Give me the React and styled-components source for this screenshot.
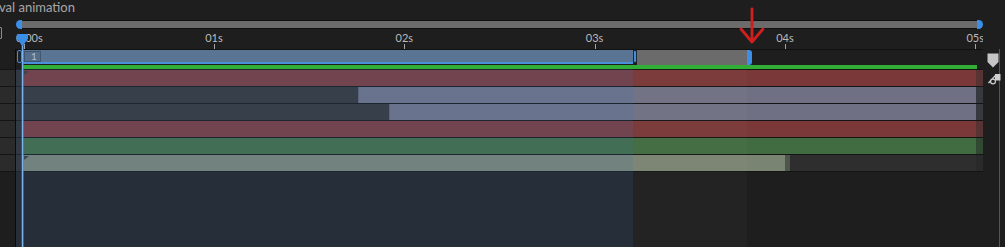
import React from 'react';
import styled, { createGlobalStyle } from 'styled-components';

const PX_PER_SEC = 190.3;
const ORIGIN = 7.7; // x of 0s inside the timeline column

const seconds = ['0:00s', '01s', '02s', '03s', '04s', '05s'];

const tracks = [
    { kind: 'red', marker: true },
    { kind: 'lavender', lead: 335 },
    { kind: 'lavender', lead: 366 },
    { kind: 'red' },
    { kind: 'green' },
    { kind: 'sage', marker: true, barWidth: 762 },
];

const palette = {
    red: { bar: '#7a3838', cap: '#573333' },
    lavender: { bar: '#707084', cap: '#38383f' },
    green: { bar: '#416b40', cap: '#314832' },
    sage: { bar: '#7a8472', cap: '#2a2a2a' },
};

const GlobalStyle = createGlobalStyle`
    html, body {
        margin: 0;
        padding: 0;
        background: #1e1e1e;
    }
    body {
        font-family: Lato, "Open Sans", "Liberation Sans", sans-serif;
    }
`;

export default function App() {
    return (
        <>
            <GlobalStyle />
            <Frame>
                <Title>val animation</Title>
                <Body>
                    <LeftPanel>
                        <LeftTop>
                            <Checkbox />
                        </LeftTop>
                        <LeftLower>
                            <WorkGap />
                            {tracks.map((t, i) => (
                                <LeftCell key={i} />
                            ))}
                        </LeftLower>
                    </LeftPanel>

                    <Timeline>
                        <ScrollBand>
                            <Knob $side="left" />
                            <Thumb />
                            <Knob $side="right" />
                        </ScrollBand>

                        <Ruler>
                            {seconds.map((s, i) => (
                                <React.Fragment key={s}>
                                    <Label $x={ORIGIN + i * PX_PER_SEC} $first={i === 0}>{s}</Label>
                                    <Tick $x={ORIGIN + i * PX_PER_SEC} />
                                </React.Fragment>
                            ))}
                        </Ruler>

                        <WorkBand>
                            <StartGrip />
                            <RangeBlue>
                                <Tag>1</Tag>
                            </RangeBlue>
                            <MidGrip />
                            <RangeGray />
                            <EndGrip />
                        </WorkBand>

                        <GreenLine />

                        <Rows>
                            {tracks.map((t, i) => (
                                <Row key={i}>
                                    <Gutter />
                                    <Track>
                                        {t.lead && <Lead $w={t.lead} />}
                                        <Bar $color={palette[t.kind].bar} $w={t.barWidth} $marker={t.marker} $edge={!!t.lead} />
                                        {t.barWidth && (
                                            <>
                                                <BarGrip />
                                                <Rest />
                                            </>
                                        )}
                                    </Track>
                                    <Cap $color={palette[t.kind].cap} />
                                </Row>
                            ))}
                        </Rows>
                    </Timeline>

                    <RightPanel>
                        <RightColumn>
                            <svg width="12" height="15" viewBox="0 0 12 15">
                                <path d="M0.5 0.5 H11.5 V9 L6 14.5 L0.5 9 Z" fill="#c6c6c6" />
                            </svg>
                            <svg width="14" height="13" viewBox="0 0 14 13">
                                <path d="M1.5 11 L8.5 3.5" stroke="#cfcfcf" strokeWidth="1.4" fill="none" />
                                <path d="M8 2 H13.5 V8.5 H8 Z" fill="#cfcfcf" />
                                <circle cx="6" cy="9.5" r="2.4" stroke="#cfcfcf" strokeWidth="1.2" fill="#1e1e1e" />
                            </svg>
                        </RightColumn>
                    </RightPanel>
                </Body>

                <Tint />
                <Haze />
                <PlayLine />
                <PlayHead width="11" height="13" viewBox="0 0 11 13">
                    <path d="M1 0 H10 Q11 0 11 1 V4.5 L5.5 12.5 L0 4.5 V1 Q0 0 1 0 Z" fill="#3a8ee6" />
                </PlayHead>
                <Arrow width="28" height="40" viewBox="0 0 28 40">
                    <path d="M14 3 V35" stroke="#d01f1f" strokeWidth="2.8" strokeLinecap="round" />
                    <path d="M3 23 L14 36 L25 23" stroke="#d01f1f" strokeWidth="2.8" strokeLinecap="round" strokeLinejoin="round" fill="none" />
                </Arrow>
            </Frame>
        </>
    );
}

const Frame = styled.div`
    position: relative;
    width: 1005px;
    height: 247px;
    overflow: hidden;
    background: #1e1e1e;
    display: flex;
    flex-direction: column;
`

const Title = styled.div`
    height: 20px;
    margin-left: -1px;
    font-size: 13px;
    line-height: 14px;
    color: #a8a8a8;
    white-space: nowrap;
`

const Body = styled.div`
    flex: 1;
    display: flex;
`

const LeftPanel = styled.div`
    width: 16px;
    display: flex;
    flex-direction: column;
`

const LeftTop = styled.div`
    height: 29px;
`

const Checkbox = styled.div`
    margin: 7px 0 0 -9px;
    width: 11px;
    height: 12px;
    box-sizing: border-box;
    border: 1px solid #8e8e8e;
    border-radius: 1px;
`

const LeftLower = styled.div`
    flex: 1;
    border-right: 1px solid #0b0b0b;
`

const WorkGap = styled.div`
    height: 20px;
`

const LeftCell = styled.div`
    height: 17px;
    box-sizing: border-box;
    border-top: 1px solid #141414;
    background: #2b2b2b;

    &:last-child {
        height: 18px;
        border-bottom: 1px solid #141414;
    }
`

const Timeline = styled.div`
    width: 967px;
    overflow: hidden;
    display: flex;
    flex-direction: column;
`

const ScrollBand = styled.div`
    height: 9px;
    display: flex;
    align-items: center;
`

const Knob = styled.div`
    width: 6px;
    height: 9px;
    background: #3d8ee8;
    border-radius: ${p => (p.$side === 'left' ? '5px 0 0 5px' : '0 5px 5px 0')};
`

const Thumb = styled.div`
    flex: 1;
    height: 9px;
    box-sizing: border-box;
    background: #6b6b6b;
    border-top: 1px solid #0f0f0f;
    border-bottom: 1px solid #0f0f0f;
`

const Ruler = styled.div`
    position: relative;
    height: 20px;
`

const Label = styled.span`
    position: absolute;
    top: 2px;
    left: ${p => (p.$first ? 0 : p.$x)}px;
    transform: ${p => (p.$first ? 'none' : 'translateX(-50%)')};
    font-size: 11px;
    line-height: 14px;
    color: #bababa;
    white-space: nowrap;
`

const Tick = styled.div`
    position: absolute;
    top: 15px;
    left: ${p => Math.round(p.$x)}px;
    width: 1px;
    height: 10px;
    background: #a2a2a2;
`

const WorkBand = styled.div`
    height: 16px;
    box-sizing: border-box;
    border-top: 1px solid #111111;
    display: flex;
    align-items: flex-start;
    background: #1e1e1e;
    position: relative;
`

const StartGrip = styled.div`
    margin-left: 1px;
    width: 5px;
    height: 13px;
    box-sizing: border-box;
    border: 1px solid #4a8ad0;
    border-radius: 2px;
    background: #1b2532;
`

const RangeBlue = styled.div`
    width: 611px;
    height: 14px;
    box-sizing: border-box;
    background: #5a7594;
    border-bottom: 2px solid #4b90da;
    padding: 1px 0 0 2px;
`

const Tag = styled.div`
    width: 17px;
    height: 11px;
    box-sizing: border-box;
    border: 1px solid #3f5572;
    background: #536d8b;
    color: #aebfd3;
    font-size: 10px;
    line-height: 9px;
    padding-left: 6px;
`

const MidGrip = styled.div`
    width: 4px;
    height: 13px;
    box-sizing: border-box;
    border: 1px solid #1c2a3a;
    border-radius: 0 2px 2px 0;
    background: #4a8ad0;
`

const RangeGray = styled.div`
    width: 110px;
    height: 15px;
    background: #6b6b6b;
`

const EndGrip = styled.div`
    width: 5px;
    height: 15px;
    background: #3d8ee8;
    border-radius: 0 3px 3px 0;
`

const GreenLine = styled.div`
    height: 4px;
    margin: 0 6px 0 6px;
    background: #30ae36;
`

const Rows = styled.div`
    display: flex;
    flex-direction: column;
    border-bottom: 1px solid #141414;
`

const Row = styled.div`
    height: 17px;
    box-sizing: border-box;
    border-top: 1px solid #141414;
    display: flex;
`

const Gutter = styled.div`
    width: 7px;
    background: #2b2b2b;
`

const Track = styled.div`
    flex: 1;
    display: flex;
    background: #333333;
`

const Lead = styled.div`
    width: ${p => p.$w}px;
    background: #333333;
`

const Bar = styled.div`
    position: relative;
    ${p => (p.$w ? `width: ${p.$w}px;` : 'flex: 1;')}
    background: ${p => p.$color};
    ${p => (p.$edge ? 'border-left: 1px solid #5c6072;' : '')}

    &::before {
        content: '';
        display: ${p => (p.$marker ? 'block' : 'none')};
        position: absolute;
        top: 1px;
        left: 1px;
        border-top: 4px solid #3a3a3a;
        border-right: 5px solid transparent;
    }
`

const BarGrip = styled.div`
    width: 5px;
    background: #4f554d;
`

const Rest = styled.div`
    flex: 1;
    background: #2e2e2e;
`

const Cap = styled.div`
    width: 7px;
    background: ${p => p.$color};
`

const RightPanel = styled.div`
    width: 22px;
    display: flex;
    flex-direction: column;
    padding-top: 29px;
`

const RightColumn = styled.div`
    width: 17px;
    flex: 1;
    box-sizing: border-box;
    border-right: 1px solid #3157a6;
    display: flex;
    flex-direction: column;
    align-items: flex-start;
    gap: 4px;
    padding: 4px 0 0 4px;
`

const Tint = styled.div`
    position: absolute;
    left: 16px;
    top: 69px;
    bottom: 0;
    width: 617px;
    background: rgba(72, 130, 200, 0.16);
    pointer-events: none;
`

const Haze = styled.div`
    position: absolute;
    left: 633px;
    top: 69px;
    bottom: 0;
    width: 114px;
    background: rgba(255, 255, 255, 0.025);
    pointer-events: none;
`

const PlayLine = styled.div`
    position: absolute;
    left: 22px;
    top: 40px;
    bottom: 0;
    width: 1px;
    background: #7ab2ee;
    box-shadow: 1px 0 0 rgba(70, 140, 220, 0.55), -1px 0 0 rgba(70, 140, 220, 0.35);
`

const PlayHead = styled.svg`
    position: absolute;
    left: 17px;
    top: 34px;
`

const Arrow = styled.svg`
    position: absolute;
    left: 738px;
    top: 6px;
`
